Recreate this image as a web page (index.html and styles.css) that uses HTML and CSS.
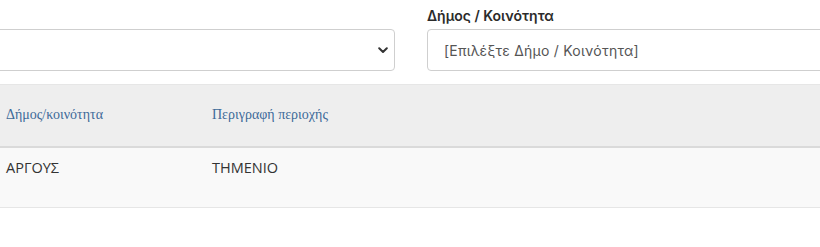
FILE: index.html
```html
<!DOCTYPE html>
<html lang="el">
<head>
<meta charset="utf-8">
<link rel="stylesheet" href="styles.css">
</head>
<body>
<div class="filters">
  <div class="field field-left">
    <div class="select">
      <span class="select-value"></span>
      <svg class="chev" width="10" height="7" viewBox="0 0 10 7"><path d="M1.2 1.3 L5 5 L8.8 1.3" fill="none" stroke="#333" stroke-width="2" stroke-linecap="round" stroke-linejoin="round"/></svg>
    </div>
  </div>
  <div class="field field-right">
    <label class="label">Δήμος / Κοινότητα</label>
    <div class="input">[Επιλέξτε Δήμο / Κοινότητα]</div>
  </div>
</div>
<table class="grid">
  <colgroup><col class="c1"><col class="c2"><col></colgroup>
  <thead>
    <tr><th>Δήμος/κοινότητα</th><th>Περιγραφή περιοχής</th><th></th></tr>
  </thead>
  <tbody>
    <tr><td>ΑΡΓΟΥΣ</td><td>ΤΗΜΕΝΙΟ</td><td></td></tr>
  </tbody>
</table>
</body>
</html>
```
FILE: styles.css
```css
html, body { margin: 0; padding: 0; background: #fff; }
body { width: 820px; overflow: hidden; font-family: Inter, "Noto Sans", sans-serif; }
.filters {
  display: grid;
  grid-template-columns: 415px 1fr;
  column-gap: 32px;
  margin-left: -20px;
  margin-right: -40px;
  padding-top: 8px;
  height: 76px;
}
.field { display: flex; flex-direction: column; justify-content: flex-end; padding-bottom: 13px; }
.label {
  font-size: 14px; font-weight: 600; color: #2b2b2b;
  line-height: 16px; margin-bottom: 5px;
}
.select, .input {
  box-sizing: border-box; height: 42px;
  border: 1px solid #cfcfcf; border-radius: 4px; background: #fff;
  display: flex; align-items: center;
}
.select { justify-content: flex-end; padding-right: 6px; }
.chev { display: block; margin-top: 1px; }
.input { padding-left: 16px; font-size: 14px; letter-spacing: 0.25px; color: #555; }
.grid { border-collapse: collapse; width: 100%; table-layout: fixed; }
.grid col.c1, .grid col.c2 { width: 206px; }
.grid th {
  background: #eeeeee; border-top: 1px solid #e6e6e6; border-bottom: 2px solid #dadada;
  height: 62px; box-sizing: border-box; text-align: left; font-weight: normal;
  font-family: "Liberation Serif", serif; font-size: 14px; color: #3d6a99;
  padding: 0 6px; vertical-align: middle;
}
.grid td {
  background: #f9f9f9; border-bottom: 1px solid #e6e6e6;
  height: 61px; box-sizing: border-box; vertical-align: top;
  padding: 10px 6px 0;
  font-family: "Open Sans", sans-serif; font-size: 14.5px; color: #333;
}
```
